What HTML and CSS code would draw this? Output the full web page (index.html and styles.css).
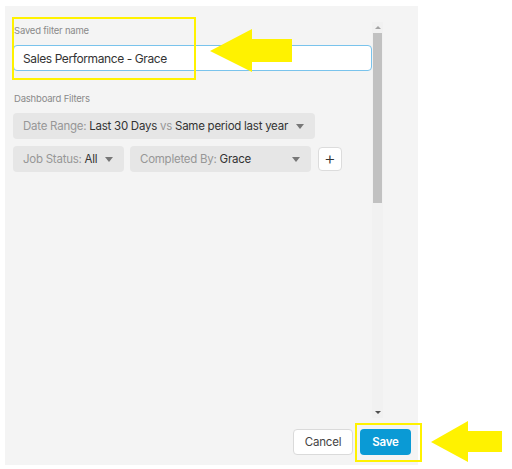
FILE: index.html
```html
<!DOCTYPE html>
<html lang="en">
<head>
  <meta charset="UTF-8" />
  <title>Save filter</title>
  <link rel="stylesheet" href="styles.css">
</head>
<body>

  <div class="panel">
    <div class="panel-body">
      <div class="content">
        <div class="label">Saved filter name</div>
        <input class="name-input" type="text" value="Sales Performance - Grace">

        <div class="label section">Dashboard Filters</div>

        <div class="chip-row">
          <div class="chip">
            <span><span class="muted">Date Range:</span> Last 30 Days <span class="muted">vs</span> Same period last year</span>
            <span class="caret"></span>
          </div>
        </div>

        <div class="chip-row">
          <div class="chip status">
            <span><span class="muted">Job Status:</span> All</span>
            <span class="caret"></span>
          </div>
          <div class="chip completed">
            <span><span class="muted">Completed By:</span> Grace</span>
            <span class="caret"></span>
          </div>
          <button class="add-btn">+</button>
        </div>
      </div>

      <div class="scrollbar">
        <div class="scroll-arrow up"></div>
        <div class="scroll-thumb"></div>
        <div class="scroll-track"></div>
        <div class="scroll-arrow down"></div>
      </div>
    </div>

    <div class="footer">
      <button class="cancel">Cancel</button>
      <button class="save">Save</button>
    </div>
  </div>

  <!-- annotation overlay -->
  <svg class="annotations" width="512" height="469" viewBox="0 0 512 469">
    <rect x="13" y="18" width="182" height="61" fill="none" stroke="#fff200" stroke-width="2"/>
    <rect x="356" y="424" width="65" height="37" fill="none" stroke="#fff200" stroke-width="2"/>
    <polygon points="210,51 252,29 252,39 292,39 292,62 252,62 252,72" fill="#fff200"/>
    <polygon points="431,442 468,421 468,431 502,431 502,452 468,452 468,462" fill="#fff200"/>
  </svg>

</body>
</html>
```

FILE: styles.css
```css
* {
  box-sizing: border-box;
  margin: 0;
  padding: 0;
  font-family: Inter, 'Noto Sans', sans-serif;
}

body {
  background: #fff;
  width: 512px;
  height: 469px;
  position: relative;
  overflow: hidden;
}

.panel {
  margin: 6px 0 0 5px;
  width: 413px;
  height: 459px;
  background: #f4f4f4;
  padding: 16px 34px 0 8px;
  display: flex;
  flex-direction: column;
}

.panel-body {
  display: flex;
  height: 396px;
}

.content {
  width: 359px;
  padding-top: 2px;
}

.label {
  font-size: 9.5px;
  letter-spacing: -0.2px;
  line-height: 14px;
  color: #8a8a8a;
  padding-left: 1px;
}

.label.section {
  margin-top: 21px;
  margin-bottom: 7px;
}

.name-input {
  display: block;
  margin-top: 7px;
  width: 359px;
  height: 26px;
  border: 1px solid #79c3ec;
  border-radius: 4px;
  background: #fff;
  padding: 0 9px;
  font-size: 12px;
  letter-spacing: -0.4px;
  color: #333;
  outline: none;
}

.chip-row {
  display: flex;
  gap: 6px;
  margin-bottom: 7px;
  align-items: center;
}

.chip {
  height: 26px;
  background: #e6e6e6;
  border-radius: 4px;
  display: flex;
  align-items: center;
  justify-content: space-between;
  gap: 8px;
  padding: 0 11px 0 10px;
  font-size: 11.5px;
  letter-spacing: -0.25px;
  color: #333;
  white-space: nowrap;
}

.chip.status { width: 111px; }
.chip.completed { width: 181px; padding-left: 10px; }

.muted { color: #979797; }

.caret {
  width: 0;
  height: 0;
  border-left: 4px solid transparent;
  border-right: 4px solid transparent;
  border-top: 5px solid #777;
}

.add-btn {
  width: 24px;
  height: 24px;
  margin-left: 1px;
  background: #fff;
  border: 1px solid #dcdcdc;
  border-radius: 4px;
  font-size: 18px;
  line-height: 20px;
  font-weight: 300;
  color: #333;
}

.scrollbar {
  width: 11px;
  background: #f1f1f1;
  display: flex;
  flex-direction: column;
}

.scroll-arrow {
  height: 11px;
  display: flex;
  align-items: center;
  justify-content: center;
}

.scroll-arrow::before {
  content: "";
  border-left: 3px solid transparent;
  border-right: 3px solid transparent;
}

.scroll-arrow.up::before { border-bottom: 3px solid #a3a3a3; }
.scroll-arrow.down::before { border-top: 3px solid #505050; }

.scroll-thumb {
  height: 170px;
  margin: 0 1px;
  background: #c1c1c1;
}

.scroll-track { flex: 1; }

.footer {
  display: flex;
  justify-content: flex-end;
  gap: 7px;
  padding: 11px 0 0;
  margin-right: -27px;
}

.footer button {
  height: 26px;
  border-radius: 4px;
  font-size: 11.5px;
  letter-spacing: -0.2px;
}

.cancel {
  width: 60px;
  background: #fff;
  border: 1px solid #dadada;
  color: #444;
}

.save {
  width: 51px;
  background: #0a9ad5;
  border: none;
  color: #fff;
  font-weight: 600;
}

.annotations {
  position: absolute;
  top: 0;
  left: 0;
  pointer-events: none;
}
```
